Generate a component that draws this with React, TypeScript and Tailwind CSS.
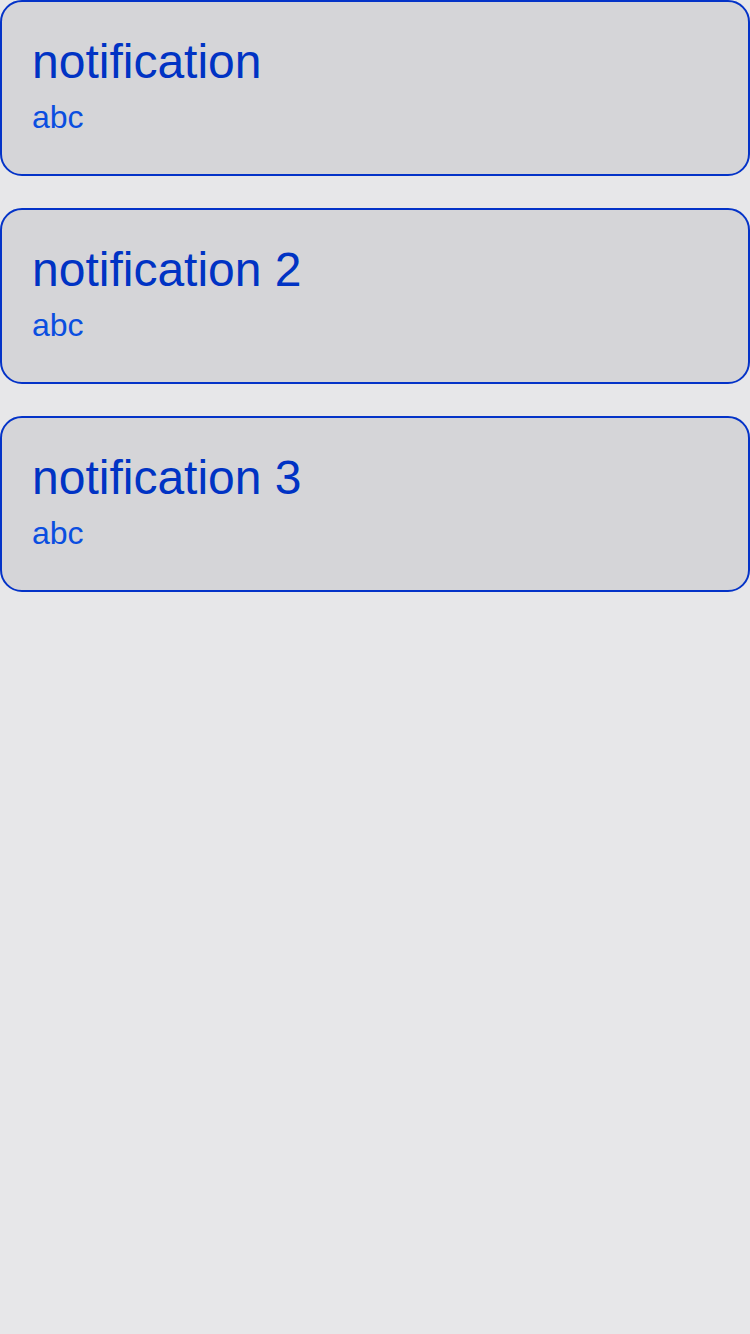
import React from "react";

const items = [
  { title: "notification", body: "abc" },
  { title: "notification 2", body: "abc" },
  { title: "notification 3", body: "abc" },
];

export default function App() {
  return (
    <div
      className="min-h-[1334px] w-[750px] bg-[#e7e7e9] flex flex-col gap-[32px]"
      style={{ fontFamily: '"Liberation Sans", Arial, sans-serif' }}
    >
      {items.map((it) => (
        <div
          key={it.title}
          className="h-[176px] box-border rounded-[22px] border-2 border-[#0433c8] bg-[#d5d5d8] pl-[30px] pt-[32px] flex flex-col"
        >
          <div className="text-[48px] leading-[55px] text-[#0033c4]">{it.title}</div>
          <div className="mt-[10px] text-[32px] leading-[37px] text-[#0a4ee0]">{it.body}</div>
        </div>
      ))}
    </div>
  );
}
